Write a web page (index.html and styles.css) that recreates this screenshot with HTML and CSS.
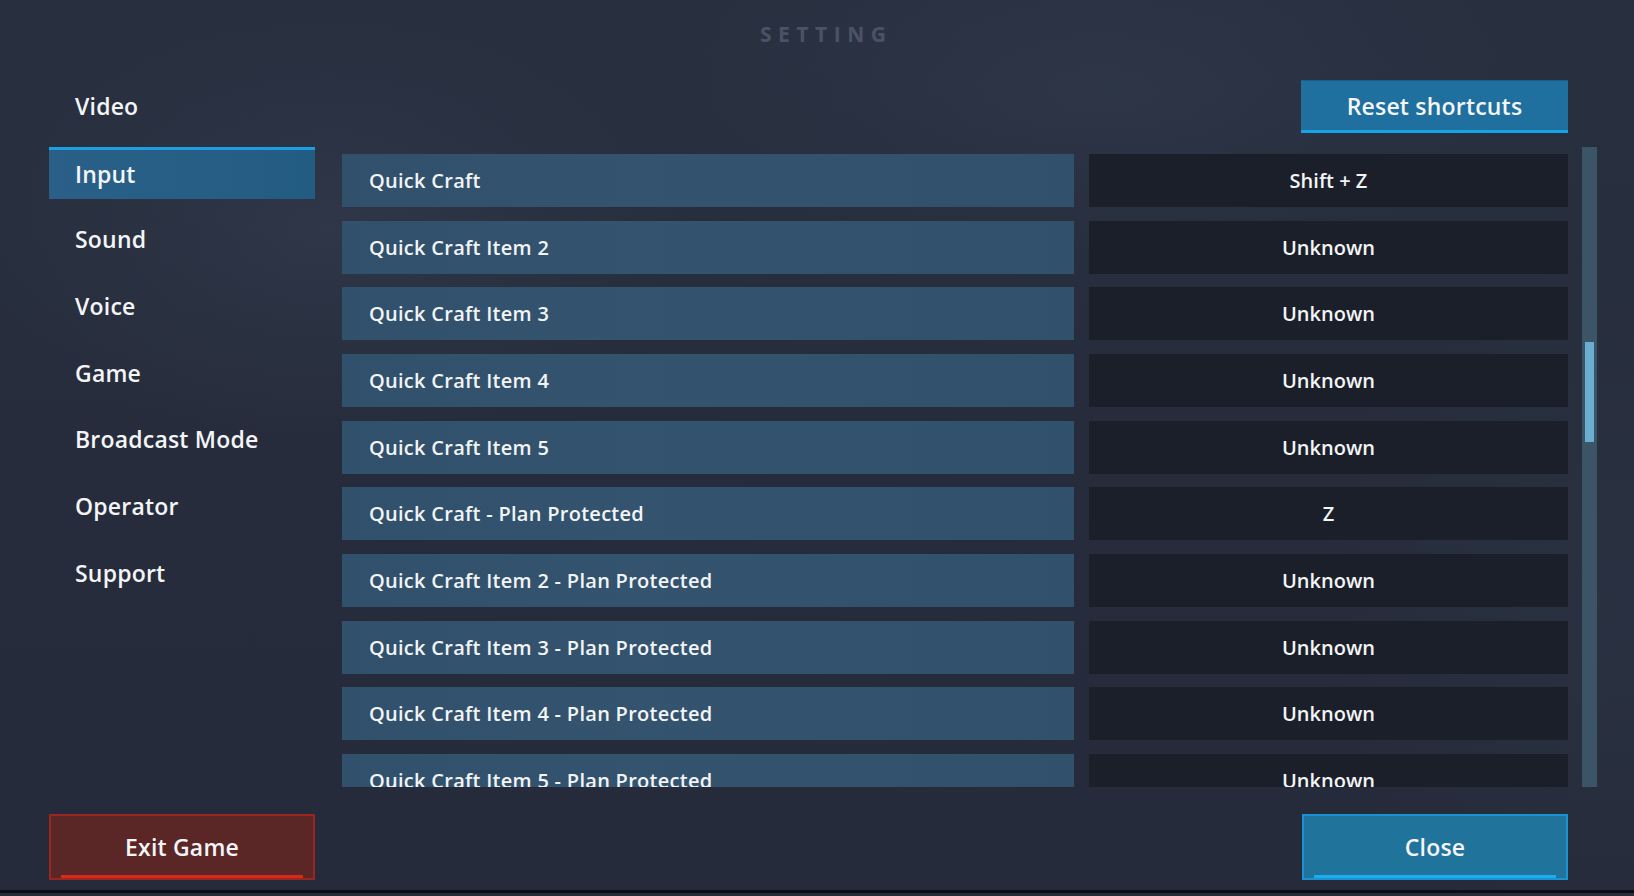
FILE: index.html
```html
<!DOCTYPE html>
<html lang="en">
<head>
<meta charset="utf-8">
<title>Setting</title>
<link rel="stylesheet" href="styles.css">
</head>
<body>
<div class="page">
  <h1 class="title">SETTING</h1>

  <nav class="sidebar">
    <div class="nav-item">Video</div>
    <div class="nav-item active">Input</div>
    <div class="nav-item">Sound</div>
    <div class="nav-item">Voice</div>
    <div class="nav-item">Game</div>
    <div class="nav-item">Broadcast Mode</div>
    <div class="nav-item">Operator</div>
    <div class="nav-item">Support</div>
  </nav>

  <button class="btn btn-reset">Reset shortcuts</button>

  <div class="list">
    <div class="row"><div class="label">Quick Craft</div><div class="value">Shift + Z</div></div>
    <div class="row"><div class="label">Quick Craft Item 2</div><div class="value">Unknown</div></div>
    <div class="row"><div class="label">Quick Craft Item 3</div><div class="value">Unknown</div></div>
    <div class="row"><div class="label">Quick Craft Item 4</div><div class="value">Unknown</div></div>
    <div class="row"><div class="label">Quick Craft Item 5</div><div class="value">Unknown</div></div>
    <div class="row"><div class="label">Quick Craft - Plan Protected</div><div class="value">Z</div></div>
    <div class="row"><div class="label">Quick Craft Item 2 - Plan Protected</div><div class="value">Unknown</div></div>
    <div class="row"><div class="label">Quick Craft Item 3 - Plan Protected</div><div class="value">Unknown</div></div>
    <div class="row"><div class="label">Quick Craft Item 4 - Plan Protected</div><div class="value">Unknown</div></div>
    <div class="row"><div class="label">Quick Craft Item 5 - Plan Protected</div><div class="value">Unknown</div></div>
  </div>

  <div class="scrollbar"><div class="thumb"></div></div>

  <button class="btn btn-exit">Exit Game</button>
  <button class="btn btn-close">Close</button>
</div>
</body>
</html>
```

FILE: styles.css
```css
* { box-sizing: border-box; }

html, body {
  margin: 0;
  padding: 0;
  width: 1634px;
  height: 896px;
  overflow: hidden;
}

body {
  background:
    radial-gradient(ellipse 500px 300px at 330px 230px, rgba(60, 70, 90, 0.35), transparent 70%),
    radial-gradient(ellipse 600px 250px at 1100px 90px, rgba(55, 65, 85, 0.35), transparent 70%),
    radial-gradient(ellipse 400px 500px at 1600px 600px, rgba(50, 60, 80, 0.3), transparent 70%),
    linear-gradient(180deg, #283040 0%, #262c3b 50%, #252b3a 100%);
  font-family: "Open Sans", "DejaVu Sans", sans-serif;
  color: #f2f3f5;
}

.page {
  display: grid;
  padding-left: 49px;
  grid-template-columns: 266px 27px 1226px 14px 15px;
  grid-template-rows: 80px 53px 14px 640px 27px 66px;
  height: 893px;
  border-bottom: 3px solid #0b0e16;
}

.title {
  grid-row: 1;
  grid-column: 1 / -1;
  margin: 0;
  padding-top: 20px;
  height: 80px;
  text-align: center;
  font-size: 21px;
  font-weight: 700;
  letter-spacing: 6.5px;
  text-indent: 6.5px;
  color: #4a5365;
  line-height: 28px;
}

.sidebar {
  grid-column: 1;
  grid-row: 2 / 5;
  display: flex;
  flex-direction: column;
  gap: 14.67px;
}

.nav-item {
  height: 52px;
  display: flex;
  align-items: center;
  padding-left: 26px;
  font-size: 23px;
  font-weight: 600;
  letter-spacing: 0.2px;
  color: #f4f5f7;
}

.nav-item.active {
  background: linear-gradient(90deg, #2a6088 0%, #235c83 100%);
  border-top: 3px solid #1c9ee0;
}

.btn {
  font-family: "Open Sans", "DejaVu Sans", sans-serif;
  font-size: 23px;
  font-weight: 600;
  letter-spacing: 0.2px;
  color: #f4f5f7;
  cursor: pointer;
  position: relative;
  padding: 0;
}

.btn-reset {
  grid-column: 3;
  grid-row: 2;
  justify-self: end;
  width: 267px;
  height: 53px;
  background: #1f6f9f;
  border: none;
  border-top: 1px solid #1c5f8b;
  border-bottom: 3px solid #16a4e6;
}

.list {
  grid-column: 3;
  grid-row: 4;
  overflow: hidden;
  padding-top: 7px;
  display: flex;
  flex-direction: column;
  gap: 13.67px;
}

.row {
  display: grid;
  grid-template-columns: 732px 479px;
  column-gap: 15px;
  height: 53px;
  flex: none;
}

.label {
  background: linear-gradient(90deg, #30506b 0%, #33536e 40%, #30506c 100%);
  display: flex;
  align-items: center;
  padding-left: 27px;
  font-size: 20px;
  font-weight: 600;
  letter-spacing: 0.28px;
  color: #f2f4f6;
}

.value {
  background: #1b1f2a;
  display: flex;
  align-items: center;
  justify-content: center;
  font-size: 20px;
  font-weight: 600;
  color: #f2f4f6;
}

.scrollbar {
  grid-column: 5;
  grid-row: 4;
  background: #3b5566;
  position: relative;
}

.thumb {
  position: absolute;
  left: 3px;
  right: 3px;
  top: 195px;
  height: 100px;
  background: #6aaed0;
}

.btn-exit {
  grid-column: 1;
  grid-row: 6;
  width: 266px;
  height: 66px;
  background: #5a2626;
  border: 2px solid #9a271d;
}

.btn-exit::after {
  content: "";
  position: absolute;
  left: 10px;
  right: 10px;
  bottom: 0;
  height: 3px;
  background: #d8291a;
}

.btn-close {
  grid-column: 3;
  grid-row: 6;
  justify-self: end;
  width: 266px;
  height: 66px;
  background: #20739b;
  border: 2px solid #1a93d2;
}

.btn-close::after {
  content: "";
  position: absolute;
  left: 10px;
  right: 10px;
  bottom: 0;
  height: 3px;
  background: #1aaef0;
}
```
